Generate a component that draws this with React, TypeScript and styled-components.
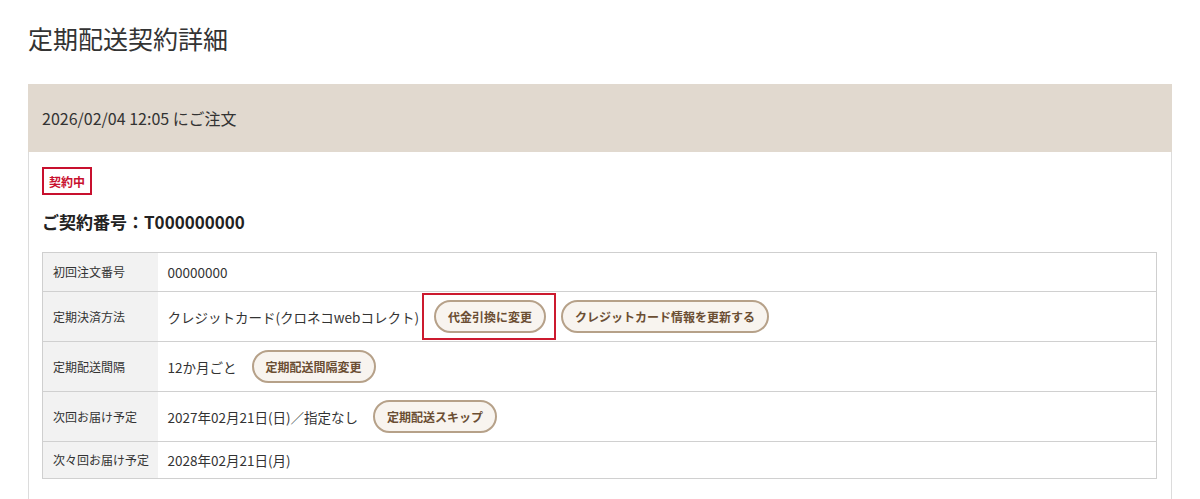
import React from "react";
import styled, { createGlobalStyle } from "styled-components";

const Global = createGlobalStyle`
  html, body { margin: 0; padding: 0; background: #fff; }
  body {
    font-family: "Noto Sans CJK JP", "Noto Sans", "Liberation Sans", sans-serif;
    color: #333;
    overflow: hidden;
  }
  * { box-sizing: border-box; }
`;

const Page = styled.div`
  padding: 20px 28px 0 28px;
`;

const Title = styled.h1`
  margin: 0 0 28px 0;
  font-size: 25px;
  line-height: 36px;
  font-weight: 400;
  color: #333;
`;

const Card = styled.section`
  border: 1px solid #dcdcdc;
  border-bottom: none;
  min-height: 440px;
`;

const CardHeader = styled.div`
  background: #e1d9cf;
  height: 68px;
  display: flex;
  align-items: center;
  margin: -1px -1px 0 -1px;
  padding: 0 14px;
  font-size: 16px;
  color: #333;
`;

const CardBody = styled.div`
  padding: 15px 14px 20px 13px;
  display: flex;
  flex-direction: column;
  align-items: flex-start;
`;

const Badge = styled.span`
  display: inline-flex;
  align-items: center;
  justify-content: center;
  width: 50px;
  height: 28px;
  border: 2px solid #c8102e;
  color: #c8102e;
  font-size: 12px;
  font-weight: 700;
`;

const ContractNo = styled.h2`
  margin: 15px 0 18px 0;
  font-size: 17px;
  line-height: 24px;
  font-weight: 700;
  color: #222;
`;

const Table = styled.table`
  width: 100%;
  border-collapse: collapse;
  border: 1px solid #cfcfcf;
`;

const Row = styled.tr`
  border-bottom: 1px solid #d0d0d0;
`;

const Label = styled.th`
  width: 115px;
  background: #f2f2f2;
  text-align: left;
  font-weight: 400;
  font-size: 12px;
  line-height: 20px;
  padding: 9px 6px 9px 10px;
  color: #333;
  white-space: nowrap;
  tr:last-child > & { padding-top: 8px; padding-bottom: 8px; }
`;

const Value = styled.td<{ $tall?: boolean }>`
  font-size: 13.5px;
  line-height: 20px;
  padding: ${(p) => (p.$tall ? "8px 10px" : "9px 10px")};
  color: #333;
  tr:last-child > & { padding-top: 8px; padding-bottom: 8px; }
`;

const Inline = styled.div`
  display: flex;
  align-items: center;
  gap: 15px;
`;

const PillButton = styled.button`
  display: inline-flex;
  align-items: center;
  height: 33px;
  padding: 0 12px;
  border: 2px solid #b6a189;
  border-radius: 17px;
  background: #f8f4ef;
  color: #6b4e33;
  font-family: inherit;
  font-size: 12px;
  font-weight: 700;
  line-height: 1;
  cursor: pointer;
  white-space: nowrap;
`;

const Highlight = styled.span`
  position: relative;
  display: inline-flex;
  &::after {
    content: "";
    position: absolute;
    top: -7px;
    bottom: -7px;
    left: -12px;
    right: -10px;
    border: 2px solid #cc1a2f;
    pointer-events: none;
  }
`;

type RowData = {
  label: string;
  value: string;
  buttons?: { text: string; highlight?: boolean }[];
};

const rows: RowData[] = [
  { label: "初回注文番号", value: "00000000" },
  {
    label: "定期決済方法",
    value: "クレジットカード(クロネコwebコレクト)",
    buttons: [
      { text: "代金引換に変更", highlight: true },
      { text: "クレジットカード情報を更新する" },
    ],
  },
  {
    label: "定期配送間隔",
    value: "12か月ごと",
    buttons: [{ text: "定期配送間隔変更" }],
  },
  {
    label: "次回お届け予定",
    value: "2027年02月21日(日)／指定なし",
    buttons: [{ text: "定期配送スキップ" }],
  },
  { label: "次々回お届け予定", value: "2028年02月21日(月)" },
];

export default function App() {
  return (
    <>
      <Global />
      <Page>
        <Title>定期配送契約詳細</Title>
        <Card>
          <CardHeader>2026/02/04 12:05 にご注文</CardHeader>
          <CardBody>
            <Badge>契約中</Badge>
            <ContractNo>ご契約番号：T000000000</ContractNo>
            <Table>
              <tbody>
                {rows.map((r) => (
                  <Row key={r.label}>
                    <Label>{r.label}</Label>
                    <Value $tall={!!r.buttons}>
                      {r.buttons ? (
                        <Inline>
                          <span>{r.value}</span>
                          {r.buttons.map((b) =>
                            b.highlight ? (
                              <Highlight key={b.text}>
                                <PillButton>{b.text}</PillButton>
                              </Highlight>
                            ) : (
                              <PillButton key={b.text}>{b.text}</PillButton>
                            )
                          )}
                        </Inline>
                      ) : (
                        r.value
                      )}
                    </Value>
                  </Row>
                ))}
              </tbody>
            </Table>
          </CardBody>
        </Card>
      </Page>
    </>
  );
}
